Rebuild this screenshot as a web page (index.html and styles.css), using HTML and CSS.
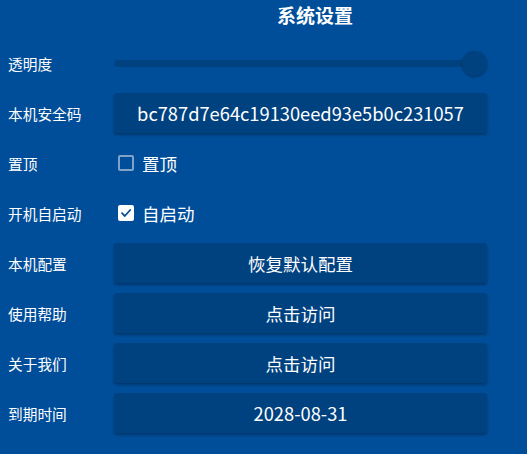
FILE: index.html
```html
<!DOCTYPE html>
<html lang="zh">
<head>
    <meta charset="UTF-8">
    <title>系统设置</title>
    <link rel="stylesheet" href="styles.css">
</head>
<body>
    <div class="panel">
        <!-- Titolo -->
        <div class="title">系统设置</div>

        <div class="rows">
            <div class="row">
                <span class="label">透明度</span>
                <div class="slider">
                    <div class="track"></div>
                    <div class="thumb"></div>
                </div>
            </div>
            <div class="row">
                <span class="label">本机安全码</span>
                <div class="btn num">bc787d7e64c19130eed93e5b0c231057</div>
            </div>
            <div class="row">
                <span class="label">置顶</span>
                <label class="check">
                    <span class="box"></span>
                    <span>置顶</span>
                </label>
            </div>
            <div class="row">
                <span class="label">开机自启动</span>
                <label class="check">
                    <span class="box checked">
                        <svg width="12" height="12" viewBox="0 0 12 12"><path d="M2 6.2 L4.8 9 L10.2 3" fill="none" stroke="#0a4d96" stroke-width="1.8" stroke-linecap="round" stroke-linejoin="round"/></svg>
                    </span>
                    <span>自启动</span>
                </label>
            </div>
            <div class="row">
                <span class="label">本机配置</span>
                <div class="btn">恢复默认配置</div>
            </div>
            <div class="row">
                <span class="label">使用帮助</span>
                <div class="btn">点击访问</div>
            </div>
            <div class="row">
                <span class="label">关于我们</span>
                <div class="btn">点击访问</div>
            </div>
            <div class="row">
                <span class="label">到期时间</span>
                <div class="btn num">2028-08-31</div>
            </div>
        </div>
    </div>
</body>
</html>
```

FILE: styles.css
```css
/* Reset */
* { margin: 0; padding: 0; box-sizing: border-box; }

body {
    background: #004e9a;
    color: #ffffff;
    font-family: "Noto Sans CJK SC", "Noto Sans", sans-serif;
    height: 100vh;
    overflow: hidden;
}

.panel {
    padding: 0 40px 0 8px;
}

/* Titolo */
.title {
    height: 43px;
    padding: 1px 0 0 135px;
    text-align: center;
    font-size: 19px;
    font-weight: bold;
    line-height: 28px;
}

.rows {
    display: flex;
    flex-direction: column;
    gap: 10px;
}

.row {
    display: flex;
    align-items: center;
    height: 40px;
}

.label {
    width: 106px;
    flex-shrink: 0;
    font-size: 14.7px;
}

/* Slider */
.slider {
    flex: 1;
    position: relative;
    height: 40px;
    display: flex;
    align-items: center;
    padding-right: 12px;
}

.track {
    width: 100%;
    height: 7px;
    border-radius: 4px;
    background: #00427f;
}

.thumb {
    position: absolute;
    right: 0;
    top: 8px;
    width: 25px;
    height: 25px;
    border-radius: 50%;
    background: #00427f;
    box-shadow: 0 1px 3px rgba(0, 0, 0, 0.35);
}

/* Bottoni */
.btn {
    flex: 1;
    height: 40px;
    display: flex;
    align-items: center;
    justify-content: center;
    background: #00427f;
    border-radius: 3px;
    box-shadow: 0 2px 3px rgba(0, 0, 0, 0.3);
    font-size: 17.5px;
}

.btn.num {
    font-size: 18.3px;
}

/* Checkbox */
.check {
    display: flex;
    align-items: center;
    gap: 8px;
    padding-left: 4px;
    font-size: 17.5px;
}

.box {
    width: 16px;
    height: 16px;
    border: 2px solid #7fa3c9;
    border-radius: 2px;
    display: flex;
    align-items: center;
    justify-content: center;
}

.box.checked {
    background: #ffffff;
    border-color: #ffffff;
}
```
